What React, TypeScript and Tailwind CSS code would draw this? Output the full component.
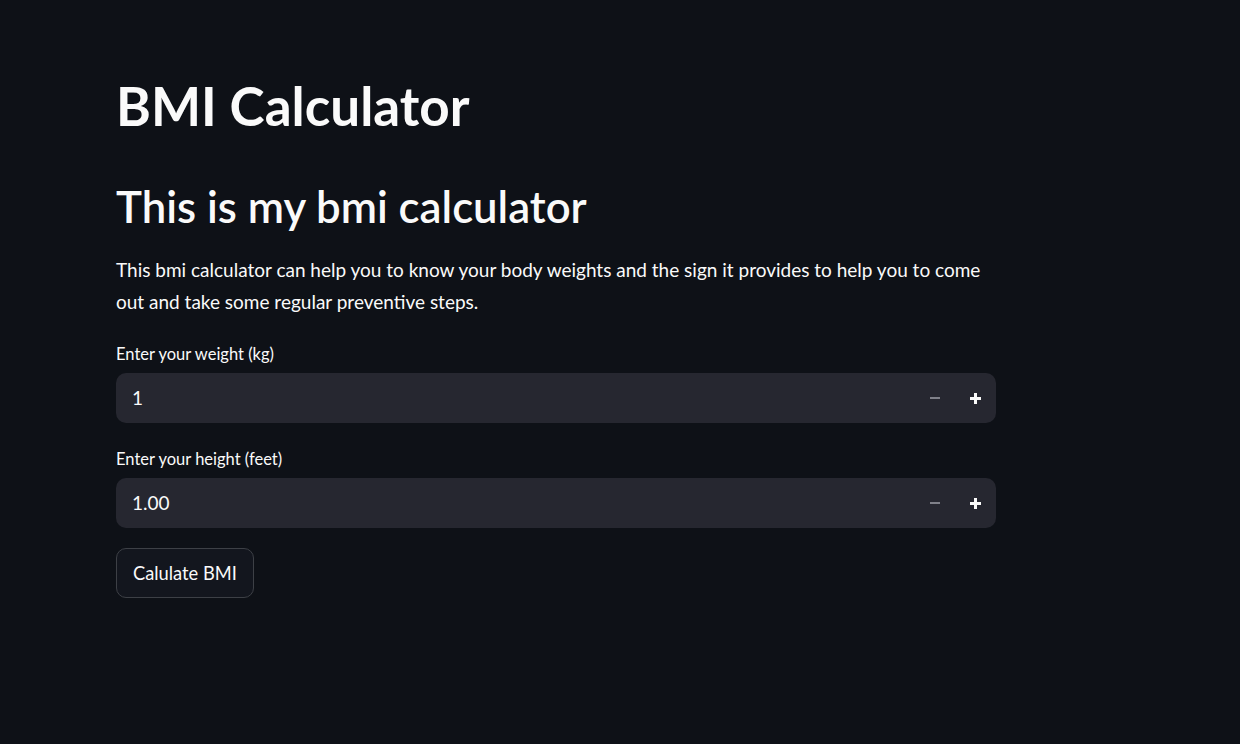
import React from "react";

function NumberInput({ label, value }: { label: string; value: string }) {
  return (
    <div className="flex flex-col gap-[9px]">
      <label className="text-[16.5px] leading-[20px] text-[#fafafa]">{label}</label>
      <div className="flex h-[50px] w-[880px] items-center rounded-[10px] bg-[#262730]">
        <div className="flex-1 pl-4 text-[19px] leading-[24px] text-[#fafafa]">{value}</div>
        <div className="flex h-full items-center pr-[1px]">
          <button className="flex h-full w-[40px] items-center justify-center">
            <span className="block h-[2px] w-[10px] bg-[#7f8089]" />
          </button>
          <button className="flex h-full w-[40px] items-center justify-center">
            <svg width="11" height="11" viewBox="0 0 11 11">
              <rect x="4" y="0" width="3" height="11" fill="#fafafa" />
              <rect x="0" y="4" width="11" height="3" fill="#fafafa" />
            </svg>
          </button>
        </div>
      </div>
    </div>
  );
}

export default function App() {
  return (
    <div
      className="min-h-screen w-full bg-[#0e1117] text-[#fafafa]"
      style={{ fontFamily: "Lato, 'Noto Sans', sans-serif" }}
    >
      <div className="ml-[116px] flex w-[880px] flex-col pt-[74px]">
        <h1 className="text-[53px] font-bold leading-[64px]">BMI Calculator</h1>
        <h2 className="mt-[41px] text-[43.7px] font-semibold leading-[54px]">This is my bmi calculator</h2>
        <p className="mt-[21px] text-[19px] leading-[32px]">
          This bmi calculator can help you to know your body weights and the sign it provides to help you to come
          out and take some regular preventive steps.
        </p>
        <div className="mt-[26px] flex flex-col gap-[26px]">
          <NumberInput label="Enter your weight (kg)" value="1" />
          <NumberInput label="Enter your height (feet)" value="1.00" />
        </div>
        <div className="mt-[20px]">
          <button className="h-[50px] rounded-[10px] border border-[#3d4046] bg-[#13161e] px-4 text-[18.3px] leading-[24px] text-[#fafafa]">
            Calulate BMI
          </button>
        </div>
      </div>
    </div>
  );
}
